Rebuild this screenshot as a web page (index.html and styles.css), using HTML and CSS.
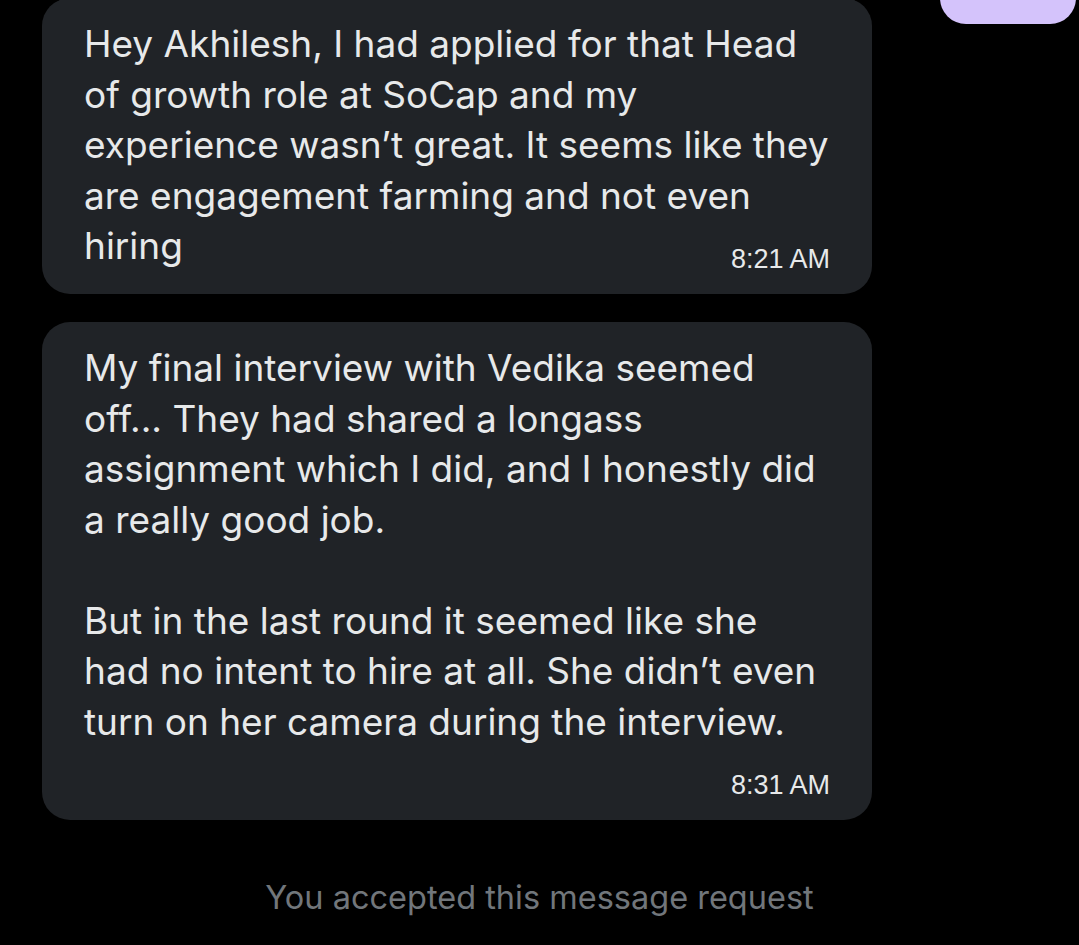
FILE: index.html
```html
<!DOCTYPE html>
<html lang="en">
<head>
  <meta charset="UTF-8" />
  <title>Messages</title>
  <link rel="stylesheet" href="styles.css">
</head>
<body>

<div class="thread">
  <!-- previous message (own, mostly scrolled out of view) -->
  <div class="row row-out">
    <div class="bubble-out"></div>
  </div>

  <div class="row">
    <div class="bubble">
      <p class="text">Hey Akhilesh, I had applied for that Head<br>of growth role at SoCap and my<br>experience wasn’t great. It seems like they<br>are engagement farming and not even<br>hiring<span class="time">8:21 AM</span></p>
    </div>
  </div>

  <div class="row">
    <div class="bubble">
      <p class="text">My final interview with Vedika seemed<br>off... They had shared a longass<br>assignment which I did, and I honestly did<br>a really good job.<br><br>But in the last round it seemed like she<br>had no intent to hire at all. She didn’t even<br>turn on her camera during the interview.<span class="time">8:31 AM</span></p>
    </div>
  </div>

  <div class="notice">You accepted this message request</div>
</div>

</body>
</html>
```

FILE: styles.css
```css
body {
  margin: 0;
  padding: 0;
  background-color: #000;
  font-family: Inter, "Noto Sans", sans-serif;
  color: #e7e9ea;
  overflow: hidden;
}

.thread {
  display: flex;
  flex-direction: column;
  gap: 28px;
}

/* own message, purple */
.row-out {
  justify-content: flex-end;
  margin-top: -16px;
  margin-bottom: -54px;
}

.row {
  display: flex;
}

.bubble-out {
  width: 136px;
  height: 40px;
  margin-right: 3px;
  background-color: #d4c3fb;
  border-radius: 0 0 26px 26px;
}

/* received message */
.bubble {
  width: 830px;
  margin-left: 42px;
  box-sizing: border-box;
  padding: 21px 42px 20px;
  background-color: #202327;
  border-radius: 28px;
}

.text {
  display: flow-root;
  margin: 0;
  font-size: 37px;
  line-height: 50.5px;
}

.time {
  float: right;
  margin-top: 23px;
  font-family: "Liberation Sans", Arial, sans-serif;
  font-size: 27px;
  line-height: 30px;
  color: #e7e9ea;
}

/* footer note */
.notice {
  margin-top: 30px;
  text-align: center;
  font-size: 32.5px;
  line-height: 40px;
  color: #71767b;
}
```
